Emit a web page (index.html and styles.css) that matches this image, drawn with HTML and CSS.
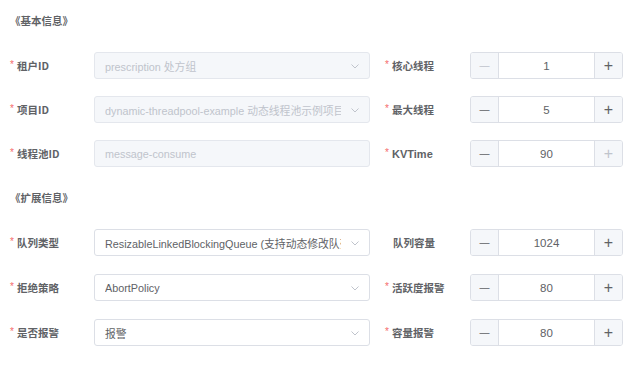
FILE: index.html
```html
<!DOCTYPE html>
<html lang="zh">
<head>
<meta charset="utf-8">
<link rel="stylesheet" href="styles.css">
</head>
<body>
<div class="page">
  <div class="section-title">《基本信息》</div>
  <div class="row">
    <div class="item">
      <label class="label req">租户ID</label>
      <div class="select disabled"><span class="val">prescription 处方组</span><svg class="arrow" viewBox="0 0 12 12"><path d="M2.5 4.5 L6 8 L9.5 4.5" fill="none" stroke="currentColor" stroke-width="1"/></svg></div>
    </div>
    <div class="item right">
      <label class="label req">核心线程</label>
      <div class="num"><span class="btn off">&#8212;</span><span class="numval">1</span><span class="btn">+</span></div>
    </div>
  </div>
  <div class="row">
    <div class="item">
      <label class="label req">项目ID</label>
      <div class="select disabled"><span class="val">dynamic-threadpool-example 动态线程池示例项目</span><svg class="arrow" viewBox="0 0 12 12"><path d="M2.5 4.5 L6 8 L9.5 4.5" fill="none" stroke="currentColor" stroke-width="1"/></svg></div>
    </div>
    <div class="item right">
      <label class="label req">最大线程</label>
      <div class="num"><span class="btn">&#8212;</span><span class="numval">5</span><span class="btn">+</span></div>
    </div>
  </div>
  <div class="row">
    <div class="item">
      <label class="label req">线程池ID</label>
      <div class="select disabled"><span class="val">message-consume</span></div>
    </div>
    <div class="item right">
      <label class="label req latin">KVTime</label>
      <div class="num"><span class="btn">&#8212;</span><span class="numval">90</span><span class="btn off">+</span></div>
    </div>
  </div>

  <div class="section-title">《扩展信息》</div>
  <div class="row">
    <div class="item">
      <label class="label req">队列类型</label>
      <div class="select"><span class="val">ResizableLinkedBlockingQueue (支持动态修改队列大小)</span><svg class="arrow" viewBox="0 0 12 12"><path d="M2.5 4.5 L6 8 L9.5 4.5" fill="none" stroke="currentColor" stroke-width="1"/></svg></div>
    </div>
    <div class="item right">
      <label class="label">队列容量</label>
      <div class="num"><span class="btn">&#8212;</span><span class="numval">1024</span><span class="btn">+</span></div>
    </div>
  </div>
  <div class="row">
    <div class="item">
      <label class="label req">拒绝策略</label>
      <div class="select"><span class="val">AbortPolicy</span><svg class="arrow" viewBox="0 0 12 12"><path d="M2.5 4.5 L6 8 L9.5 4.5" fill="none" stroke="currentColor" stroke-width="1"/></svg></div>
    </div>
    <div class="item right">
      <label class="label req">活跃度报警</label>
      <div class="num"><span class="btn">&#8212;</span><span class="numval">80</span><span class="btn">+</span></div>
    </div>
  </div>
  <div class="row">
    <div class="item">
      <label class="label req">是否报警</label>
      <div class="select"><span class="val">报警</span><svg class="arrow" viewBox="0 0 12 12"><path d="M2.5 4.5 L6 8 L9.5 4.5" fill="none" stroke="currentColor" stroke-width="1"/></svg></div>
    </div>
    <div class="item right">
      <label class="label req">容量报警</label>
      <div class="num"><span class="btn">&#8212;</span><span class="numval">80</span><span class="btn">+</span></div>
    </div>
  </div>
</div>
</body>
</html>
```

FILE: styles.css
```css
html, body {
  margin: 0;
  padding: 0;
  background: #ffffff;
}
body {
  font-family: "Liberation Sans", "Noto Sans CJK SC", sans-serif;
  color: #606266;
}
.page {
  padding: 11px 0 0 10px;
  width: 630px;
}
.section-title {
  height: 20px;
  line-height: 20px;
  font-size: 10.5px;
  font-weight: bold;
  color: #606266;
  font-family: "Noto Sans CJK SC", sans-serif;
  margin-bottom: 21px;
}
.row {
  display: flex;
  height: 27px;
  margin-bottom: 17px;
}
.row:nth-of-type(4) {
  margin-bottom: 21px;
}
.row:nth-of-type(6),
.row:nth-of-type(7) {
  margin-bottom: 18px;
}
.item {
  display: flex;
  align-items: center;
}
.item.right {
  margin-left: 15px;
}
.label {
  width: 84px;
  font-size: 10.5px;
  font-weight: bold;
  color: #606266;
  font-family: "Noto Sans CJK SC", sans-serif;
  display: flex;
  align-items: center;
}
.item.right .label {
  width: 85px;
}
.label.latin {
  font-family: "Liberation Sans", sans-serif;
  font-size: 11px;
}
.label.req::before {
  content: "*";
  color: #f56c6c;
  font-weight: normal;
  font-family: "Liberation Sans", sans-serif;
  font-size: 10px;
  width: 7px;
  margin-top: -3px;
}
.label:not(.req) {
  padding-left: 8px;
  width: 77px;
}
.item.right .label:not(.req) {
  width: 77px;
}
.select {
  box-sizing: border-box;
  width: 276px;
  height: 27px;
  border: 1px solid #dcdfe6;
  border-radius: 3px;
  background: #ffffff;
  display: flex;
  align-items: center;
  padding: 0 8px 0 10px;
  font-size: 10.8px;
  color: #606266;
  overflow: hidden;
}
.select.disabled {
  background: #f5f7fa;
  border-color: #e4e7ed;
  color: #c0c4cc;
}
.val {
  flex: 1;
  white-space: nowrap;
  overflow: hidden;
}
.arrow {
  width: 12px;
  height: 12px;
  color: #c0c4cc;
  margin-left: 8px;
  flex: none;
}
.num {
  box-sizing: border-box;
  width: 153px;
  height: 27px;
  border: 1px solid #dcdfe6;
  border-radius: 3px;
  display: flex;
  overflow: hidden;
  background: #ffffff;
}
.btn {
  width: 27px;
  flex: none;
  background: #f5f7fa;
  display: flex;
  align-items: center;
  justify-content: center;
  color: #606266;
}
.btn:first-child {
  border-right: 1px solid #dcdfe6;
  font-size: 10px;
}
.btn:last-child {
  border-left: 1px solid #dcdfe6;
  font-size: 16px;
}
.btn.off {
  color: #c0c4cc;
}
.numval {
  flex: 1;
  display: flex;
  align-items: center;
  justify-content: center;
  font-size: 11.5px;
  color: #606266;
}
```
